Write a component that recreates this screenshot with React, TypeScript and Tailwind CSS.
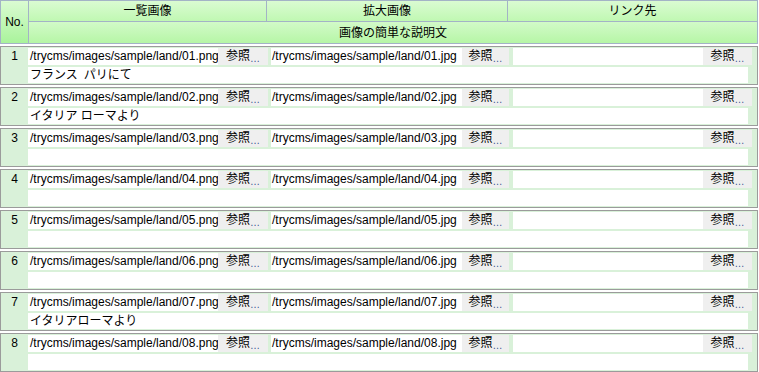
import React from "react";

const rows = [
  { n: 1, desc: "フランス\u2002パリにて" },
  { n: 2, desc: "イタリア ローマより" },
  { n: 3, desc: "" },
  { n: 4, desc: "" },
  { n: 5, desc: "" },
  { n: 6, desc: "" },
  { n: 7, desc: "イタリアローマより" },
  { n: 8, desc: "" },
];

function Btn({ w }: { w: string }) {
  return (
    <div className={`${w} h-full bg-[#efefef] flex items-center justify-center leading-[17px]`}>
      <span>参照</span>
      <span className="text-[10px] text-[#35558f] leading-none mt-[4px]">…</span>
    </div>
  );
}

export default function App() {
  return (
    <div className="w-[758px] bg-white text-black text-[12px] font-['Liberation_Sans','Noto_Sans_CJK_JP',sans-serif]">
      <div className="flex h-[44px] border border-[#a3b3c6]">
        <div className="w-[28px] border-r border-[#a3b3c6] bg-gradient-to-b from-[#dafbd2] to-[#a9f39b] flex items-center justify-center">
          No.
        </div>
        <div className="flex-1 flex flex-col">
          <div className="flex h-[21px] border-b border-[#a3b3c6]">
            <div className="w-[238px] border-r border-[#a3b3c6] bg-gradient-to-b from-[#dafbd2] to-[#c0f8b2] flex items-center justify-center">
              一覧画像
            </div>
            <div className="w-[241px] border-r border-[#a3b3c6] bg-gradient-to-b from-[#dafbd2] to-[#c0f8b2] flex items-center justify-center">
              拡大画像
            </div>
            <div className="flex-1 bg-gradient-to-b from-[#dafbd2] to-[#c0f8b2] flex items-center justify-center">
              リンク先
            </div>
          </div>
          <div className="flex-1 bg-gradient-to-b from-[#d2fac8] to-[#b6f6a6] flex items-center justify-center">
            画像の簡単な説明文
          </div>
        </div>
      </div>

      <div className="flex flex-col gap-[2px] mt-[2px]">
        {rows.map((r) => (
          <div key={r.n} className="flex h-[39px] border border-[#9b9b9b] bg-[#d9f1d9]">
            <div className="w-[27px] flex justify-center pt-[1px] leading-[17px]">{r.n}</div>
            <div className="flex-1 flex flex-col pt-[1px] gap-[2px]">
              <div className="flex h-[17px] leading-[17px] whitespace-nowrap">
                <div className="w-[190px] bg-white pl-[2px] overflow-hidden">
                  /trycms/images/sample/land/0{r.n}.png
                </div>
                <Btn w="w-[50px]" />
                <div className="w-[3px]" />
                <div className="w-[191px] bg-white pl-[1px] overflow-hidden">
                  /trycms/images/sample/land/0{r.n}.jpg
                </div>
                <Btn w="w-[47px]" />
                <div className="w-[4px]" />
                <div className="w-[190px] bg-white" />
                <Btn w="w-[49px]" />
              </div>
              <div className="flex h-[16px] leading-[16px]">
                <div className="w-[720px] bg-white pl-[2px] whitespace-nowrap">{r.desc}</div>
              </div>
            </div>
          </div>
        ))}
      </div>
    </div>
  );
}
